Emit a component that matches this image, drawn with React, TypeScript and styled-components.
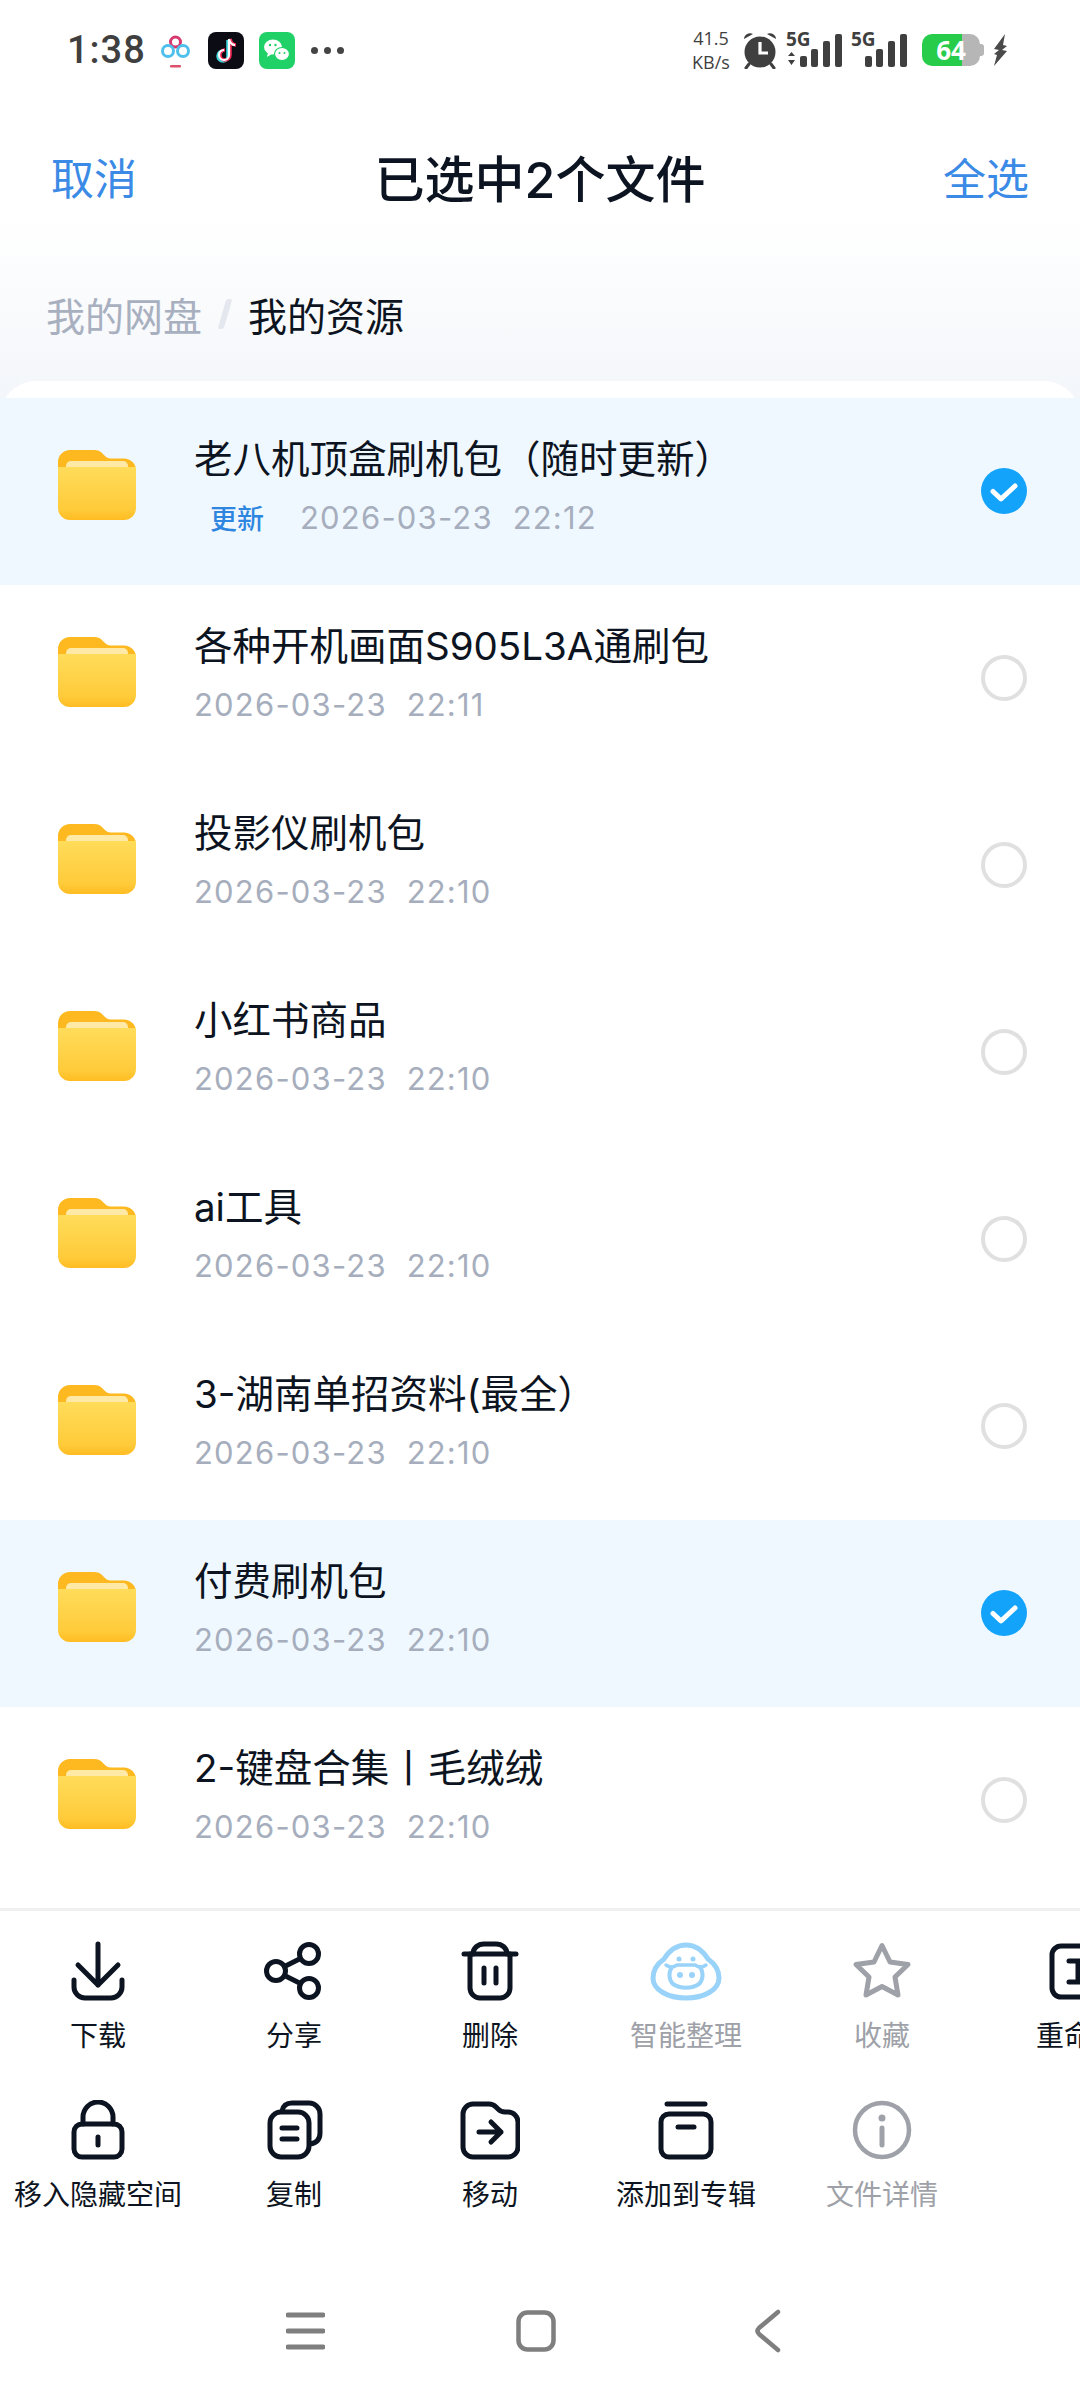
import styled, { createGlobalStyle } from 'styled-components';

const FONT = '"Inter", "Noto Sans CJK SC", "Noto Sans", sans-serif';

const GlobalStyle = createGlobalStyle`
  html, body {
    margin: 0;
    padding: 0;
    background: #fff;
  }
  * {
    box-sizing: border-box;
  }
`;

interface FileItem {
  name: string;
  date: string;
  selected?: boolean;
  isNew?: boolean;
}

const FILES: FileItem[] = [
  { name: '老八机顶盒刷机包（随时更新）', date: '2026-03-23  22:12', selected: true, isNew: true },
  { name: '各种开机画面S905L3A通刷包', date: '2026-03-23  22:11' },
  { name: '投影仪刷机包', date: '2026-03-23  22:10' },
  { name: '小红书商品', date: '2026-03-23  22:10' },
  { name: 'ai工具', date: '2026-03-23  22:10' },
  { name: '3-湖南单招资料(最全）', date: '2026-03-23  22:10' },
  { name: '付费刷机包', date: '2026-03-23  22:10', selected: true },
  { name: '2-键盘合集丨毛绒绒', date: '2026-03-23  22:10' },
];

function FolderIcon() {
  return (
    <svg width="78" height="70" viewBox="0 0 78 70">
      <defs>
        <linearGradient id="folderFront" x1="0" y1="0" x2="0" y2="1">
          <stop offset="0" stopColor="#ffdc5a" />
          <stop offset="0.8" stopColor="#ffcb3a" />
          <stop offset="1" stopColor="#ffbc22" />
        </linearGradient>
      </defs>
      <path d="M0 12a12 12 0 0 1 12-12h24c4 0 6 1 8 3l3 3c1.500 1.500 3 2.500 6 2.500h13a12 12 0 0 1 12 12v12H0z" fill="#fdb91f" />
      <rect x="8" y="11" width="62" height="20" rx="5" fill="#ffe9a6" />
      <path d="M0 17h78v41a12 12 0 0 1-12 12H12A12 12 0 0 1 0 58z" fill="url(#folderFront)" />
    </svg>
  );
}

function CheckIcon({ on }: { on?: boolean }) {
  return (
    <CheckSlot>
      {on ? (
        <svg width="46" height="46" viewBox="0 0 46 46">
          <circle cx="23" cy="23" r="23" fill="#14a3fb" />
          <path d="M12 23.500l8 7.500 14-13" fill="none" stroke="#fff" strokeWidth="5" strokeLinecap="round" strokeLinejoin="round" />
        </svg>
      ) : (
        <EmptyCheck />
      )}
    </CheckSlot>
  );
}

const strokeProps = {
  fill: 'none',
  stroke: 'currentColor',
  strokeWidth: 5,
  strokeLinecap: 'round' as const,
  strokeLinejoin: 'round' as const,
};

const ActionSvg = ({ children, wide }: { children: React.ReactNode; wide?: boolean }) => (
  <svg width={wide ? 80 : 60} height="60" viewBox={wide ? '0 0 80 60' : '0 0 60 60'} {...strokeProps}>
    {children}
  </svg>
);

const ICONS: Record<string, React.ReactNode> = {
  download: (
    <ActionSvg>
      <path d="M30 3v41M10 24l20 20 20-20" />
      <path d="M6 39v7a11 11 0 0 0 11 11h26a11 11 0 0 0 11-11v-7" />
    </ActionSvg>
  ),
  share: (
    <ActionSvg>
      <circle cx="45" cy="13" r="9.500" />
      <circle cx="12" cy="30" r="9.500" />
      <circle cx="45" cy="47" r="9.500" />
      <path d="M20.500 25.500l16-8M20.500 34.500l16 8" />
    </ActionSvg>
  ),
  trash: (
    <ActionSvg>
      <path d="M4 13h52" />
      <path d="M13 13c0-6 5-10 11-10h12c6 0 11 4 11 10" />
      <path d="M10 13v34a10 10 0 0 0 10 10h20a10 10 0 0 0 10-10V13" />
      <path d="M24 27v15M36 27v15" />
    </ActionSvg>
  ),
  pig: (
    <ActionSvg wide>
      <path d="M40 4c10 0 17 6 22 14 7 5 11 12 11 19 0 12-15 20-33 20S7 49 7 37c0-7 4-14 11-19C23 10 30 4 40 4z" />
      <path d="M20 24c4 3 8 2 11 0h18c3 2 7 3 11 0" strokeWidth="3.500" />
      <path d="M26 26c-4 6-3 13 1 17 7 5 19 5 26 0 4-4 5-11 1-17" strokeWidth="4" />
      <circle cx="33" cy="18" r="2.500" fill="currentColor" stroke="none" />
      <circle cx="47" cy="18" r="2.500" fill="currentColor" stroke="none" />
      <circle cx="34" cy="34" r="3" fill="currentColor" stroke="none" />
      <circle cx="46" cy="34" r="3" fill="currentColor" stroke="none" />
    </ActionSvg>
  ),
  star: (
    <ActionSvg>
      <path d="M30 4.500l8 16.500 18 2.500-13 12.500 3 18-16-8.500-16 8.500 3-18L4 23.500 22 21z" />
    </ActionSvg>
  ),
  rename: (
    <ActionSvg>
      <rect x="4" y="5" width="52" height="51" rx="9" />
      <path d="M21 20h18M30 20v21M21 41h18" />
    </ActionSvg>
  ),
  lock: (
    <ActionSvg>
      <rect x="6" y="24" width="48" height="33" rx="8" />
      <path d="M15 24V17a15 15 0 0 1 30 0v7" />
      <path d="M30 37v8" />
    </ActionSvg>
  ),
  copy: (
    <ActionSvg>
      <rect x="6" y="12" width="39" height="45" rx="11" />
      <path d="M18 11c1-5 4-8 10-8h17a11 11 0 0 1 11 11v19c0 6-3 10-10 11" />
      <path d="M18 28h15M18 39h15" />
    </ActionSvg>
  ),
  move: (
    <ActionSvg>
      <path d="M3 14A10 10 0 0 1 13 4h16c3 0 5 1 7 3l2 2c2 2 4 3 7 3h3a10 10 0 0 1 10 10v25a10 10 0 0 1-10 10H13A10 10 0 0 1 3 47z" />
      <path d="M19 32h22M31 22l10 10-10 10" />
    </ActionSvg>
  ),
  album: (
    <ActionSvg>
      <path d="M11 4h38" />
      <rect x="5" y="14" width="50" height="43" rx="8" />
      <path d="M22 27h16" />
    </ActionSvg>
  ),
  info: (
    <ActionSvg>
      <circle cx="30" cy="30" r="27" strokeWidth="4.500" />
      <circle cx="30" cy="18" r="3.500" fill="currentColor" stroke="none" />
      <path d="M30 28v17" />
    </ActionSvg>
  ),
};

interface ActionItem {
  icon: string;
  label: string;
  tone?: 'dim' | 'pig';
}

const ACTION_ROWS: ActionItem[][] = [
  [
    { icon: 'download', label: '下载' },
    { icon: 'share', label: '分享' },
    { icon: 'trash', label: '删除' },
    { icon: 'pig', label: '智能整理', tone: 'pig' },
    { icon: 'star', label: '收藏', tone: 'dim' },
    { icon: 'rename', label: '重命名' },
  ],
  [
    { icon: 'lock', label: '移入隐藏空间' },
    { icon: 'copy', label: '复制' },
    { icon: 'move', label: '移动' },
    { icon: 'album', label: '添加到专辑' },
    { icon: 'info', label: '文件详情', tone: 'dim' },
  ],
];

function SignalIcon({ arrows }: { arrows?: boolean }) {
  const bars = [
    { x: 14, h: 11 },
    { x: 25, h: 18 },
    { x: 37, h: 26 },
    { x: 49, h: 33 },
  ];
  return (
    <Signal>
      <FiveG>5G</FiveG>
      <svg width="56" height="36" viewBox="0 0 56 36">
        {bars.map((b) => (
          <rect key={b.x} x={b.x} y={35 - b.h} width="7" height={b.h} rx="2" fill="#3f3f3f" />
        ))}
        {arrows && <path d="M2 24l3.500-4 3.500 4zM2 28l3.500 5 3.500-5z" fill="#3f3f3f" />}
      </svg>
    </Signal>
  );
}

export default function App() {
  return (
    <>
      <GlobalStyle />
      <Page>
        <TopArea>
          <StatusBar>
            <Time>1:38</Time>
            <svg width="35" height="37" viewBox="0 0 35 37">
              <rect width="35" height="37" rx="7" fill="#fff" />
              <circle cx="17.500" cy="10" r="5" fill="none" stroke="#d8386f" strokeWidth="3" />
              <circle cx="10" cy="19" r="5.500" fill="none" stroke="#4fc0ec" strokeWidth="3" />
              <circle cx="25" cy="19" r="5.500" fill="none" stroke="#4fc0ec" strokeWidth="3" />
              <rect x="12" y="33" width="11" height="2.500" rx="1" fill="#e0506a" />
            </svg>
            <svg width="36" height="37" viewBox="0 0 36 37">
              <rect width="36" height="37" rx="8" fill="#0c0c14" />
              <path d="M20 8v16a5 5 0 1 1-5-5" fill="none" stroke="#3fd8df" strokeWidth="3.500" />
              <path d="M22 7v16a5 5 0 1 1-5-5M22 7c1 4 3 6 6 6" fill="none" stroke="#f02a54" strokeWidth="3.500" />
              <path d="M21 7v16a5 5 0 1 1-5-5M21 7c1 4 3 6 6 6" fill="none" stroke="#fff" strokeWidth="2.200" />
            </svg>
            <svg width="36" height="37" viewBox="0 0 36 37">
              <rect width="36" height="37" rx="8" fill="#1fd166" />
              <ellipse cx="14" cy="15" rx="9" ry="7.500" fill="#fff" />
              <path d="M9 20l-1 5 5-3z" fill="#fff" />
              <ellipse cx="23" cy="22" rx="7.500" ry="6.500" fill="#fff" stroke="#1fd166" strokeWidth="1.200" />
              <circle cx="11" cy="13" r="1.200" fill="#1fd166" />
              <circle cx="16.500" cy="13" r="1.200" fill="#1fd166" />
              <circle cx="20.500" cy="21" r="1" fill="#1fd166" />
              <circle cx="25.500" cy="21" r="1" fill="#1fd166" />
            </svg>
            <Dots>
              <Dot />
              <Dot />
              <Dot />
            </Dots>
            <StatusRight>
              <Speed>
                <span>41.5</span>
                <span>KB/s</span>
              </Speed>
              <svg width="34" height="38" viewBox="0 0 34 38">
                <circle cx="17" cy="21" r="15.500" fill="#3f3f3f" />
                <path d="M1 8a6 6 0 0 1 9-5zM33 8a6 6 0 0 0-9-5z" fill="#3f3f3f" />
                <path d="M6 33l-3 4M28 33l3 4" stroke="#3f3f3f" strokeWidth="3" strokeLinecap="round" />
                <path d="M17 11v11h8" fill="none" stroke="#fff" strokeWidth="3.200" />
              </svg>
              <SignalIcon arrows />
              <SignalIcon />
              <Battery>64</Battery>
              <svg width="15" height="32" viewBox="0 0 15 32">
                <path d="M12 0L1 15l5 1-5 4 3 1-3 11 13-15-5-1 5-4-4-1z" fill="#4a4a4a" />
              </svg>
            </StatusRight>
          </StatusBar>
          <Header>
            <HeaderLink>取消</HeaderLink>
            <Title>已选中2个文件</Title>
            <HeaderLink>全选</HeaderLink>
          </Header>
          <Breadcrumb>
            <CrumbParent>我的网盘</CrumbParent>
            <CrumbSlash />
            <CrumbCurrent>我的资源</CrumbCurrent>
          </Breadcrumb>
        </TopArea>
        <Sheet>
          {FILES.map((file) => (
            <Row key={file.name} $selected={file.selected}>
              <FolderSlot>
                <FolderIcon />
              </FolderSlot>
              <RowInfo>
                <FileName>{file.name}</FileName>
                <FileMeta>
                  {file.isNew && <NewTag>更新</NewTag>}
                  <FileDate>{file.date}</FileDate>
                </FileMeta>
              </RowInfo>
              <CheckIcon on={file.selected} />
            </Row>
          ))}
        </Sheet>
        <ActionPanel>
          {ACTION_ROWS.map((row) => (
            <ActionRow key={row[0].icon}>
              {row.map((item) => (
                <Action key={item.icon} $tone={item.tone}>
                  <ActionIcon $tone={item.tone}>{ICONS[item.icon]}</ActionIcon>
                  <ActionLabel>{item.label}</ActionLabel>
                </Action>
              ))}
            </ActionRow>
          ))}
        </ActionPanel>
        <NavBar>
          <svg width="39" height="38" viewBox="0 0 39 38">
            <path d="M2 3h35M2 19h35M2 35h35" stroke="#7f7f7f" strokeWidth="5" strokeLinecap="round" />
          </svg>
          <svg width="40" height="42" viewBox="0 0 40 42">
            <rect x="2.500" y="2.500" width="35" height="37" rx="9" fill="none" stroke="#7f7f7f" strokeWidth="4.500" />
          </svg>
          <svg width="27" height="44" viewBox="0 0 27 44">
            <path d="M24 3L5 19c-2 2-2 4 0 6l19 16" fill="none" stroke="#7f7f7f" strokeWidth="4.500" strokeLinecap="round" />
          </svg>
        </NavBar>
      </Page>
    </>
  );
}

const Page = styled.div`
  width: 1080px;
  height: 2400px;
  display: flex;
  flex-direction: column;
  overflow: hidden;
  background: #fff;
  font-family: ${FONT};
  color: #0d1421;
`;

const TopArea = styled.div`
  height: 399px;
  margin-bottom: -18px;
  background: linear-gradient(180deg, #fff 0%, #fff 55%, #f3f6fa 100%);
`;

const StatusBar = styled.div`
  height: 100px;
  display: flex;
  align-items: center;
  gap: 15px;
  padding: 0 72px 0 67px;
`;

const Time = styled.div`
  font-family: "Roboto", sans-serif;
  font-size: 38px;
  font-weight: 500;
  letter-spacing: 1px;
  color: #3f3f3f;
  width: 76px;
`;

const Dots = styled.div`
  display: flex;
  gap: 6px;
  margin-left: 1px;
`;

const Dot = styled.span`
  width: 7px;
  height: 7px;
  border-radius: 50%;
  background: #444;
`;

const StatusRight = styled.div`
  margin-left: auto;
  display: flex;
  align-items: center;
  gap: 9px;
`;

const Speed = styled.div`
  display: flex;
  flex-direction: column;
  align-items: center;
  width: 46px;
  font-family: "Open Sans", sans-serif;
  font-size: 18px;
  line-height: 24px;
  color: #3f3f3f;
`;

const Signal = styled.div`
  position: relative;
  width: 56px;
  height: 36px;
`;

const FiveG = styled.span`
  position: absolute;
  top: -3px;
  left: 0;
  font-family: "Open Sans", sans-serif;
  font-size: 19px;
  font-weight: 700;
  line-height: 20px;
  color: #3f3f3f;
`;

const Battery = styled.div`
  position: relative;
  width: 58px;
  height: 32px;
  margin: 0 4px 0 6px;
  border-radius: 10px;
  background: linear-gradient(90deg, #26cc4a 0, #26cc4a 69%, #b6b6b6 69%);
  color: #fff;
  font-family: "Open Sans", sans-serif;
  font-size: 26px;
  font-weight: 700;
  line-height: 32px;
  text-align: center;

  &::after {
    content: '';
    position: absolute;
    top: 10px;
    right: -4px;
    width: 4px;
    height: 12px;
    border-radius: 0 3px 3px 0;
    background: #b6b6b6;
  }
`;

const Header = styled.div`
  height: 158px;
  display: flex;
  align-items: center;
  justify-content: space-between;
  padding: 0 51px 6px;
`;

const HeaderLink = styled.div`
  font-size: 43px;
  color: #3a8ae6;
`;

const Title = styled.div`
  font-size: 50px;
  font-weight: 500;
  color: #0d1421;
`;

const Breadcrumb = styled.div`
  height: 118px;
  display: flex;
  align-items: center;
  padding: 0 0 6px 46px;
  font-size: 39px;
`;

const CrumbParent = styled.span`
  color: #a8b0c0;
`;

const CrumbSlash = styled.span`
  width: 6px;
  height: 30px;
  margin: 0 20px 0 20px;
  border-radius: 2px;
  background: #e4e7ed;
  transform: skewX(-16deg);
`;

const CrumbCurrent = styled.span`
  color: #0d1421;
`;

const Sheet = styled.div`
  position: relative;
  flex: 1;
  padding-top: 17px;
  border-radius: 36px 36px 0 0;
  background: #fff;
`;

const Row = styled.div<{ $selected?: boolean }>`
  height: 187px;
  display: flex;
  align-items: center;
  padding: 0 53px 0 58px;
  background: ${({ $selected }) => ($selected ? '#f0f8ff' : '#fff')};
`;

const FolderSlot = styled.div`
  width: 136px;
  flex-shrink: 0;
  display: flex;
  padding-bottom: 14px;
`;

const RowInfo = styled.div`
  flex: 1;
  min-width: 0;
  display: flex;
  flex-direction: column;
  gap: 14px;
  padding-bottom: 12px;
`;

const FileName = styled.div`
  font-size: 38.5px;
  line-height: 50px;
  white-space: nowrap;
  color: #0d1421;
`;

const FileMeta = styled.div`
  display: flex;
  align-items: center;
  height: 40px;
`;

const NewTag = styled.span`
  width: 106px;
  padding-left: 16px;
  font-size: 27px;
  font-weight: 500;
  color: #2f86e0;
`;

const FileDate = styled.span`
  font-size: 31px;
  letter-spacing: 1.2px;
  white-space: pre;
  color: #a6aebd;
`;

const CheckSlot = styled.div`
  width: 46px;
  height: 46px;
  flex-shrink: 0;
  display: flex;
  margin-bottom: 2px;
`;

const EmptyCheck = styled.div`
  width: 46px;
  height: 46px;
  border: 4px solid #e0e0e0;
  border-radius: 50%;
`;

const ActionPanel = styled.div`
  height: 330px;
  padding-top: 30px;
  border-top: 3px solid #f0f0f0;
  overflow: hidden;
`;

const ActionRow = styled.div`
  display: grid;
  grid-template-columns: repeat(6, 196px);
  height: 159px;
`;

const Action = styled.div<{ $tone?: string }>`
  display: flex;
  flex-direction: column;
  align-items: center;
  gap: 15px;
  color: ${({ $tone }) => ($tone ? '#9ea1a8' : '#0d1421')};
`;

const ActionIcon = styled.div<{ $tone?: string }>`
  height: 60px;
  display: flex;
  color: ${({ $tone }) => ($tone === 'pig' ? '#9ad3f9' : 'inherit')};
`;

const ActionLabel = styled.div`
  font-size: 28px;
  line-height: 40px;
  white-space: nowrap;
`;

const NavBar = styled.div`
  height: 162px;
  display: flex;
  align-items: center;
  padding: 24px 0 0 286px;

  svg + svg {
    margin-left: 191px;
  }

  svg:last-child {
    margin-left: 198px;
  }
`;
